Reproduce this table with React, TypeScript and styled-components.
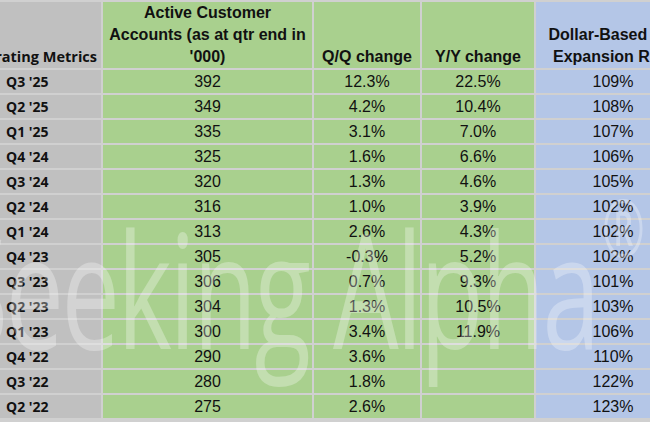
import styled, { createGlobalStyle } from "styled-components";

type Tone = "gray" | "green" | "blue";

const rows: [string, string, string, string, string][] = [
  ["Q3 '25", "392", "12.3%", "22.5%", "109%"],
  ["Q2 '25", "349", "4.2%", "10.4%", "108%"],
  ["Q1 '25", "335", "3.1%", "7.0%", "107%"],
  ["Q4 '24", "325", "1.6%", "6.6%", "106%"],
  ["Q3 '24", "320", "1.3%", "4.6%", "105%"],
  ["Q2 '24", "316", "1.0%", "3.9%", "102%"],
  ["Q1 '24", "313", "2.6%", "4.3%", "102%"],
  ["Q4 '23", "305", "-0.3%", "5.2%", "102%"],
  ["Q3 '23", "306", "0.7%", "9.3%", "101%"],
  ["Q2 '23", "304", "1.3%", "10.5%", "103%"],
  ["Q1 '23", "300", "3.4%", "11.9%", "106%"],
  ["Q4 '22", "290", "3.6%", "", "110%"],
  ["Q3 '22", "280", "1.8%", "", "122%"],
  ["Q2 '22", "275", "2.6%", "", "123%"],
];

const toneColors: Record<Tone, string> = {
  gray: "#c0c0c0",
  green: "#a9d08e",
  blue: "#b4c6e7",
};

export default function App() {
  return (
    <>
      <GlobalStyle />
      <Sheet>
        <Grid>
          <LabelHead>
            <span>Operating Metrics</span>
          </LabelHead>
          <HeadCell $tone="green">
            Active Customer
            <br />
            Accounts (as at qtr end in
            <br />
            '000)
          </HeadCell>
          <HeadCell $tone="green">Q/Q change</HeadCell>
          <HeadCell $tone="green">Y/Y change</HeadCell>
          <HeadCell $tone="blue">
            Dollar-Based Net
            <br />
            Expansion Rate
          </HeadCell>

          {rows.map(([q, accounts, qq, yy, dber]) => (
            <Row key={q}>
              <RowLabel>{q}</RowLabel>
              <Cell $tone="green">{accounts}</Cell>
              <Cell $tone="green">{qq}</Cell>
              <Cell $tone="green">{yy}</Cell>
              <Cell $tone="blue">{dber}</Cell>
            </Row>
          ))}
        </Grid>
        <Watermark aria-hidden>
          Seeking Alpha<Mark>®</Mark>
        </Watermark>
      </Sheet>
    </>
  );
}

const GlobalStyle = createGlobalStyle`
  html, body { margin: 0; padding: 0; overflow: hidden; }
  body { font-family: "Liberation Sans", Arial, sans-serif; }
`;

const Sheet = styled.div`
  position: relative;
  width: 650px;
  height: 422px;
  overflow: hidden;
  background: #d0d0d0;
`;

const Grid = styled.div`
  display: grid;
  grid-template-columns: 101px 209px 106px 112px 154px;
  grid-template-rows: 66px;
  grid-auto-rows: 23px;
  gap: 2px;
  padding-top: 2px;
  width: max-content;
`;

const Row = styled.div`
  display: contents;
`;

const HeadCell = styled.div<{ $tone: Tone }>`
  display: flex;
  align-items: flex-end;
  justify-content: center;
  text-align: center;
  background: ${(p) => toneColors[p.$tone]};
  font-weight: 700;
  font-size: 16px;
  line-height: 22px;
  color: #111;
  white-space: nowrap;
  overflow: hidden;
`;

const LabelHead = styled.div`
  display: flex;
  align-items: flex-end;
  justify-content: flex-end;
  overflow: hidden;
  padding-right: 4px;
  background: ${toneColors.gray};
  font-family: "Open Sans", Lato, sans-serif;
  font-weight: 700;
  font-size: 14.5px;
  line-height: 22px;
  color: #111;
  white-space: nowrap;
`;

const RowLabel = styled.div`
  display: flex;
  align-items: center;
  padding-left: 6px;
  background: ${toneColors.gray};
  font-family: "Open Sans", Lato, sans-serif;
  font-weight: 700;
  font-size: 14px;
  color: #111;
  white-space: nowrap;
`;

const Cell = styled.div<{ $tone: Tone }>`
  display: flex;
  align-items: center;
  justify-content: center;
  background: ${(p) => toneColors[p.$tone]};
  font-size: 16px;
  color: #111;
  white-space: nowrap;
`;

const Watermark = styled.div`
  position: absolute;
  left: -49px;
  top: 186px;
  font-family: "Open Sans", sans-serif;
  font-weight: 500;
  font-size: 104px;
  line-height: 1;
  letter-spacing: -2.5px;
  color: rgba(255, 255, 255, 0.3);
  white-space: nowrap;
  transform: scaleY(1.54);
  transform-origin: top left;
  pointer-events: none;
`;

const Mark = styled.span`
  font-size: 52px;
  vertical-align: 60px;
  margin-left: 4px;
`;
